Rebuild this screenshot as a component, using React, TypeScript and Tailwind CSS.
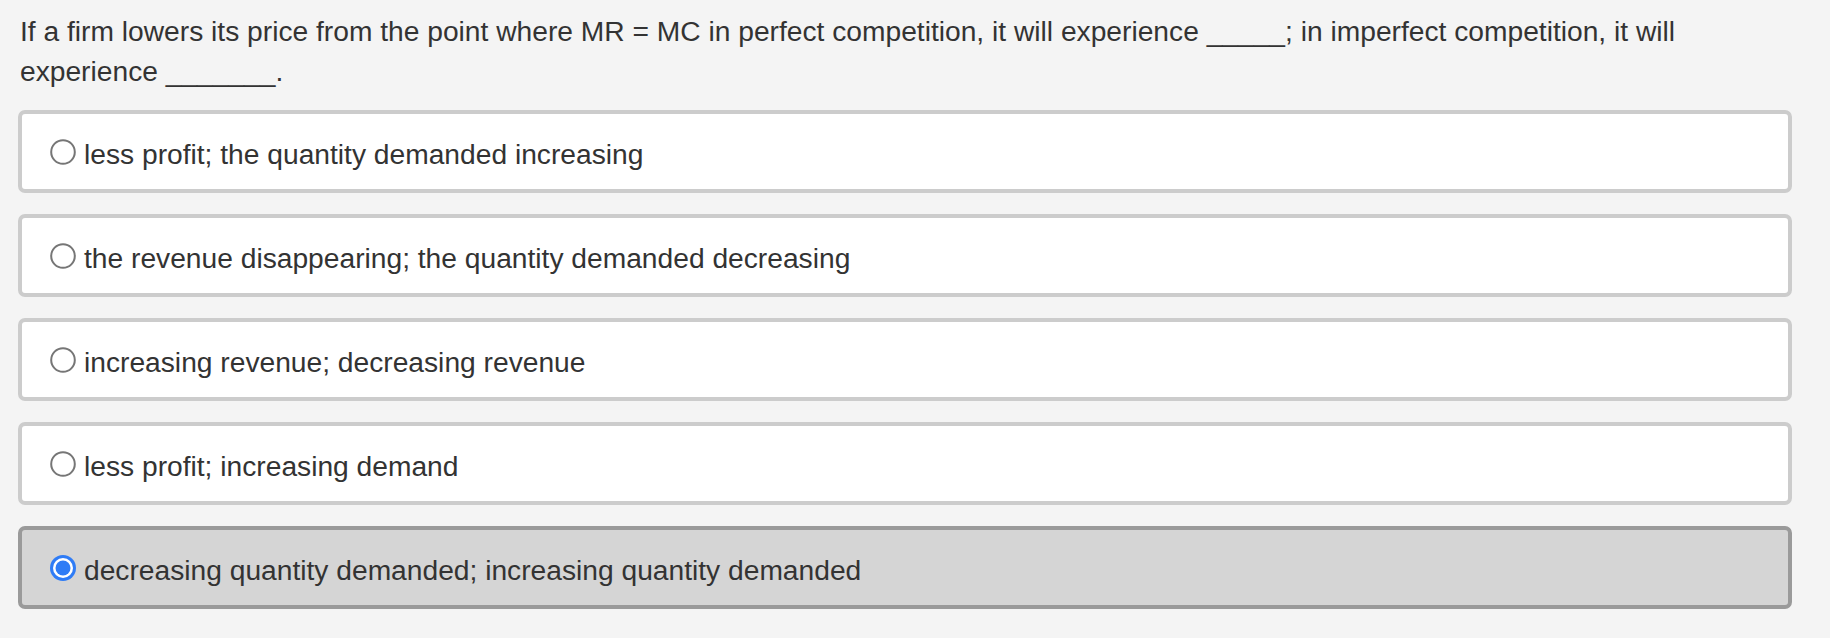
import React from "react";

const options = [
  "less profit; the quantity demanded increasing",
  "the revenue disappearing; the quantity demanded decreasing",
  "increasing revenue; decreasing revenue",
  "less profit; increasing demand",
  "decreasing quantity demanded; increasing quantity demanded",
];

function Radio({ checked }: { checked: boolean }) {
  return (
    <svg width="26" height="26" viewBox="0 0 26 26" className="shrink-0">
      {checked ? (
        <>
          <circle cx="13" cy="13" r="13" fill="#2f7cf6" />
          <circle cx="13" cy="13" r="10" fill="#ffffff" />
          <circle cx="13" cy="13" r="7.5" fill="#2f7cf6" />
        </>
      ) : (
        <circle cx="13" cy="13" r="11.8" fill="#ffffff" stroke="#767676" strokeWidth="2" />
      )}
    </svg>
  );
}

export default function App() {
  const selected = 4;
  return (
    <div
      className="min-h-screen bg-[#f4f4f4] pl-[18px] pr-[38px] pt-[11px] text-[#333333]"
      style={{ fontFamily: '"Liberation Sans", Arial, Helvetica, sans-serif' }}
    >
      <p className="px-[2px] text-[28.2px] leading-[40px]">
        If a firm lowers its price from the point where MR = MC in perfect competition, it will experience _____; in imperfect competition, it will experience _______.
      </p>
      <div className="mt-[19px] flex flex-col gap-[21px]">
        {options.map((o, i) => {
          const isSel = i === selected;
          return (
            <label
              key={i}
              className={
                isSel
                  ? "flex h-[83px] items-center gap-[8px] rounded-[7px] border-4 border-[#9a9a9a] bg-[#d5d5d5] pl-[28px] text-[28.2px] leading-[40px]"
                  : "flex h-[83px] items-center gap-[8px] rounded-[7px] border-4 border-[#cccccc] bg-white pl-[28px] text-[28.2px] leading-[40px]"
              }
            >
              <Radio checked={isSel} />
              <span className="pt-[4px]">{o}</span>
            </label>
          );
        })}
      </div>
    </div>
  );
}
